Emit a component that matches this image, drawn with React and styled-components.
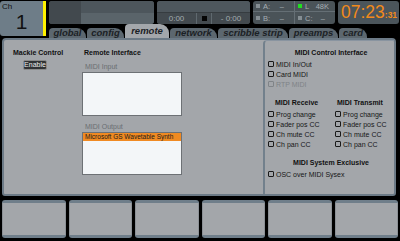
import React from "react";
import styled, { createGlobalStyle, css } from "styled-components";

const GlobalStyle = createGlobalStyle`
  html, body {
    margin: 0;
    padding: 0;
    background: #000;
    width: 400px;
    height: 241px;
    overflow: hidden;
    font-family: "Liberation Sans", Arial, sans-serif;
  }
`;

const Screen = styled.div`
  width: 400px;
  height: 241px;
  background: #000;
  display: flex;
  flex-direction: column;
`;

const Header = styled.div`
  display: flex;
  height: 38px;
`;

const ChBox = styled.div`
  width: 43px;
  height: 35px;
  margin-top: 1px;
  background: #6e7d88;
  border-radius: 3px 0 0 3px;
  border-right: 3px solid #fff200;
  display: flex;
  flex-direction: column;
  color: #111;
`;

const ChLabel = styled.div`
  font-size: 8px;
  line-height: 9px;
  padding-left: 2px;
  padding-top: 1px;
`;

const ChNumber = styled.div`
  font-size: 21px;
  line-height: 22px;
  text-align: center;
`;

const HeaderRight = styled.div`
  margin-left: 3px;
  display: flex;
  flex-direction: column;
`;

const StatusRow = styled.div`
  display: flex;
  gap: 3px;
  height: 23px;
  margin-top: 1px;
`;

const Panel = styled.div`
  width: ${(p) => p.$w}px;
  flex: none;
  background: #4b545a;
  border-radius: 3px;
  overflow: hidden;
  box-sizing: border-box;
`;

const SplitPanel = styled(Panel)`
  display: grid;
  grid-template-columns: 32px 1fr;
  grid-template-rows: 12px 11px;
`;

const DarkBlock = styled.div`
  grid-row: 1 / 3;
  background: #42494e;
`;

const LightBlock = styled.div`
  background: ${(p) => (p.$low ? "#5a646a" : "#4d565c")};
`;

const TransportPanel = styled(Panel)`
  display: flex;
  flex-direction: column;
`;

const TransportTop = styled.div`
  height: 11px;
  background: #4e575d;
  border-bottom: 1px solid #363c40;
`;

const TransportBottom = styled.div`
  flex: 1;
  display: grid;
  grid-template-columns: 39px 15px 1fr;
  background: #434a4f;
`;

const Cell = styled.div`
  display: flex;
  align-items: center;
  justify-content: center;
  color: #a2aaaf;
  font-size: 8px;
  ${(p) =>
    p.$div &&
    css`
      border-left: 1px solid #5f696f;
    `}
`;

const StopSquare = styled.div`
  width: 5px;
  height: 5px;
  background: #050505;
`;

const SyncPanel = styled(Panel)`
  display: grid;
  grid-template-columns: 41px 1fr;
  grid-template-rows: 11px 12px;
  background: #4a5358;
`;

const SyncCell = styled.div`
  display: flex;
  align-items: center;
  padding-left: 3px;
  gap: 3px;
  font-size: 7.5px;
  color: #a6aeb3;
  ${(p) => p.$right && css`border-left: 1px solid #656f75;`}
  ${(p) => p.$top && css`border-bottom: 1px solid #656f75;`}
`;

const Led = styled.span`
  width: 4px;
  height: 4px;
  background: ${(p) => (p.$on ? "#20e020" : "#858e93")};
  flex: none;
`;

const SyncValue = styled.span`
  margin-left: auto;
  margin-right: ${(p) => p.$mr}px;
`;

const ClockPanel = styled(Panel)`
  display: flex;
  align-items: baseline;
  padding: 1px 0 0 3px;
  color: #f28a1a;
  background: #4b555b;
`;

const ClockBig = styled.span`
  font-size: 17.5px;
  line-height: 21px;
`;

const ClockSmall = styled.span`
  font-size: 8.5px;
  font-weight: bold;
`;

const TabRow = styled.div`
  display: flex;
  gap: 1px;
  height: 14px;
  align-items: flex-end;
`;

const Tab = styled.div`
  width: ${(p) => p.$w}px;
  height: ${(p) => (p.$active ? 14 : 10)}px;
  background: ${(p) => (p.$active ? "#a3a7ab" : "#5c676f")};
  border-radius: 4px 9px 0 0;
  font-size: 9.5px;
  font-weight: bold;
  font-style: italic;
  color: #1b2125;
  display: flex;
  align-items: center;
  justify-content: center;
  line-height: 10px;
  ${(p) => p.$active && css`padding-bottom: 1px; box-sizing: border-box;`}
`;

const Main = styled.div`
  margin: 0 4px 0 2px;
  height: 158px;
  background: #a3a6aa;
  border: 2px solid #6c7a86;
  border-radius: 4px 4px 3px 3px;
  display: flex;
  box-sizing: border-box;
`;

const LeftArea = styled.div`
  flex: 1;
  display: flex;
  padding: 9px 0 0 7px;
`;

const Column = styled.div`
  width: ${(p) => p.$w}px;
  display: flex;
  flex-direction: column;
`;

const Title = styled.div`
  font-size: 7px;
  font-weight: bold;
  line-height: 8px;
  color: #111;
  padding-left: ${(p) => p.$pl || 0}px;
  text-align: ${(p) => (p.$center ? "center" : "left")};
`;

const EnableButton = styled.div`
  width: 24px;
  height: 10px;
  margin: 3px 0 0 12px;
  background: #303234;
  border: 1px solid #8a8a8a;
  border-radius: 2px;
  box-sizing: border-box;
  color: #ececec;
  font-size: 7px;
  line-height: 8px;
  text-align: center;
`;

const FieldLabel = styled.div`
  font-size: 7px;
  line-height: 8px;
  color: #6a6e72;
  padding-left: 3px;
  margin-top: ${(p) => p.$mt}px;
`;

const ListBox = styled.div`
  height: ${(p) => p.$h}px;
  margin-top: 1px;
  background: #f3f6f8;
  border: 1px solid #6d7175;
  box-sizing: border-box;
`;

const ListItem = styled.div`
  background: ${(p) => (p.$selected ? "#f08a22" : "transparent")};
  font-size: 6.5px;
  line-height: 8px;
  padding-left: 2px;
  color: #1a1a1a;
`;

const RightArea = styled.div`
  width: 126px;
  border-left: 2px solid #72808c;
  border-top: 1px solid #8994a0;
  border-radius: 4px 0 0 0;
  padding: 8px 0 0 3px;
  display: flex;
  flex-direction: column;
`;

const CheckRow = styled.label`
  display: flex;
  align-items: center;
  height: 10px;
  font-size: 7px;
  color: ${(p) => (p.$disabled ? "#7f8387" : "#161616")};
`;

const Box = styled.span`
  width: 6px;
  height: 6px;
  border: 1px solid ${(p) => (p.$disabled ? "#7f8387" : "#1a1a1a")};
  border-radius: 1px;
  box-sizing: border-box;
  margin-right: 2px;
  flex: none;
`;

const Section = styled.div`
  margin-top: ${(p) => p.$mt}px;
`;

const TwoCols = styled.div`
  display: grid;
  grid-template-columns: 67px 1fr;
  margin-top: 10px;
`;

const ButtonRow = styled.div`
  display: flex;
  gap: 3px;
  padding: 0 2px;
  margin-top: 4px;
`;

const SoftButton = styled.div`
  flex: 1;
  height: 38px;
  background: #a3a6aa;
  border-radius: 3px;
  border-top: 3px solid #6f7e8a;
  border-bottom: 3px solid #6f7e8a;
  box-sizing: border-box;
  box-shadow: inset 1px 0 0 #8c9196, inset -1px 0 0 #8c9196;
`;

function Check({ label, disabled }) {
  return (
    <CheckRow $disabled={disabled}>
      <Box $disabled={disabled} />
      {label}
    </CheckRow>
  );
}

const tabs = [
  ["global", 37],
  ["config", 37],
  ["remote", 44],
  ["network", 47],
  ["scribble strip", 70],
  ["preamps", 49],
  ["card", 28],
];

const ccItems = ["Prog change", "Fader pos CC", "Ch mute CC", "Ch pan CC"];

export default function App() {
  return (
    <>
      <GlobalStyle />
      <Screen>
        <Header>
          <ChBox>
            <ChLabel>Ch</ChLabel>
            <ChNumber>1</ChNumber>
          </ChBox>
          <HeaderRight>
            <StatusRow>
              <SplitPanel $w={105}>
                <DarkBlock />
                <LightBlock />
                <LightBlock $low />
              </SplitPanel>
              <TransportPanel $w={93}>
                <TransportTop />
                <TransportBottom>
                  <Cell>0:00</Cell>
                  <Cell $div>
                    <StopSquare />
                  </Cell>
                  <Cell $div>- 0:00</Cell>
                </TransportBottom>
              </TransportPanel>
              <SyncPanel $w={82}>
                <SyncCell $top>
                  <Led />
                  A:
                  <SyncValue $mr={10}>–</SyncValue>
                </SyncCell>
                <SyncCell $top $right>
                  <Led $on />
                  L<SyncValue $mr={6}>48K</SyncValue>
                </SyncCell>
                <SyncCell>
                  <Led />
                  B:
                  <SyncValue $mr={10}>–</SyncValue>
                </SyncCell>
                <SyncCell $right>
                  <Led />
                  C:
                  <SyncValue $mr={10}>–</SyncValue>
                </SyncCell>
              </SyncPanel>
              <ClockPanel $w={61}>
                <ClockBig>07:23</ClockBig>
                <ClockSmall>:31</ClockSmall>
              </ClockPanel>
            </StatusRow>
            <TabRow>
              {tabs.map(([name, w]) => (
                <Tab key={name} $w={w} $active={name === "remote"}>
                  {name}
                </Tab>
              ))}
            </TabRow>
          </HeaderRight>
        </Header>
        <Main>
          <LeftArea>
            <Column $w={71}>
              <Title $pl={2}>Mackie Control</Title>
              <EnableButton>Enable</EnableButton>
            </Column>
            <Column $w={100}>
              <Title $pl={2}>Remote Interface</Title>
              <FieldLabel $mt={6}>MIDI Input</FieldLabel>
              <ListBox $h={44} />
              <FieldLabel $mt={7}>MIDI Output</FieldLabel>
              <ListBox $h={43}>
                <ListItem $selected>Microsoft GS Wavetable Synth</ListItem>
              </ListBox>
            </Column>
          </LeftArea>
          <RightArea>
            <Title $center>MIDI Control Interface</Title>
            <Section $mt={2}>
              <Check label="MIDI In/Out" />
              <Check label="Card MIDI" />
              <Check label="RTP MIDI" disabled />
            </Section>
            <TwoCols>
              <div>
                <Title $pl={7}>MIDI Receive</Title>
                <Section $mt={2}>
                  {ccItems.map((c) => (
                    <Check key={c} label={c} />
                  ))}
                </Section>
              </div>
              <div>
                <Title $pl={2}>MIDI Transmit</Title>
                <Section $mt={2}>
                  {ccItems.map((c) => (
                    <Check key={c} label={c} />
                  ))}
                </Section>
              </div>
            </TwoCols>
            <Section $mt={10}>
              <Title $center>MIDI System Exclusive</Title>
            </Section>
            <Section $mt={2}>
              <Check label="OSC over MIDI Sysex" />
            </Section>
          </RightArea>
        </Main>
        <ButtonRow>
          {[0, 1, 2, 3, 4, 5].map((i) => (
            <SoftButton key={i} />
          ))}
        </ButtonRow>
      </Screen>
    </>
  );
}
